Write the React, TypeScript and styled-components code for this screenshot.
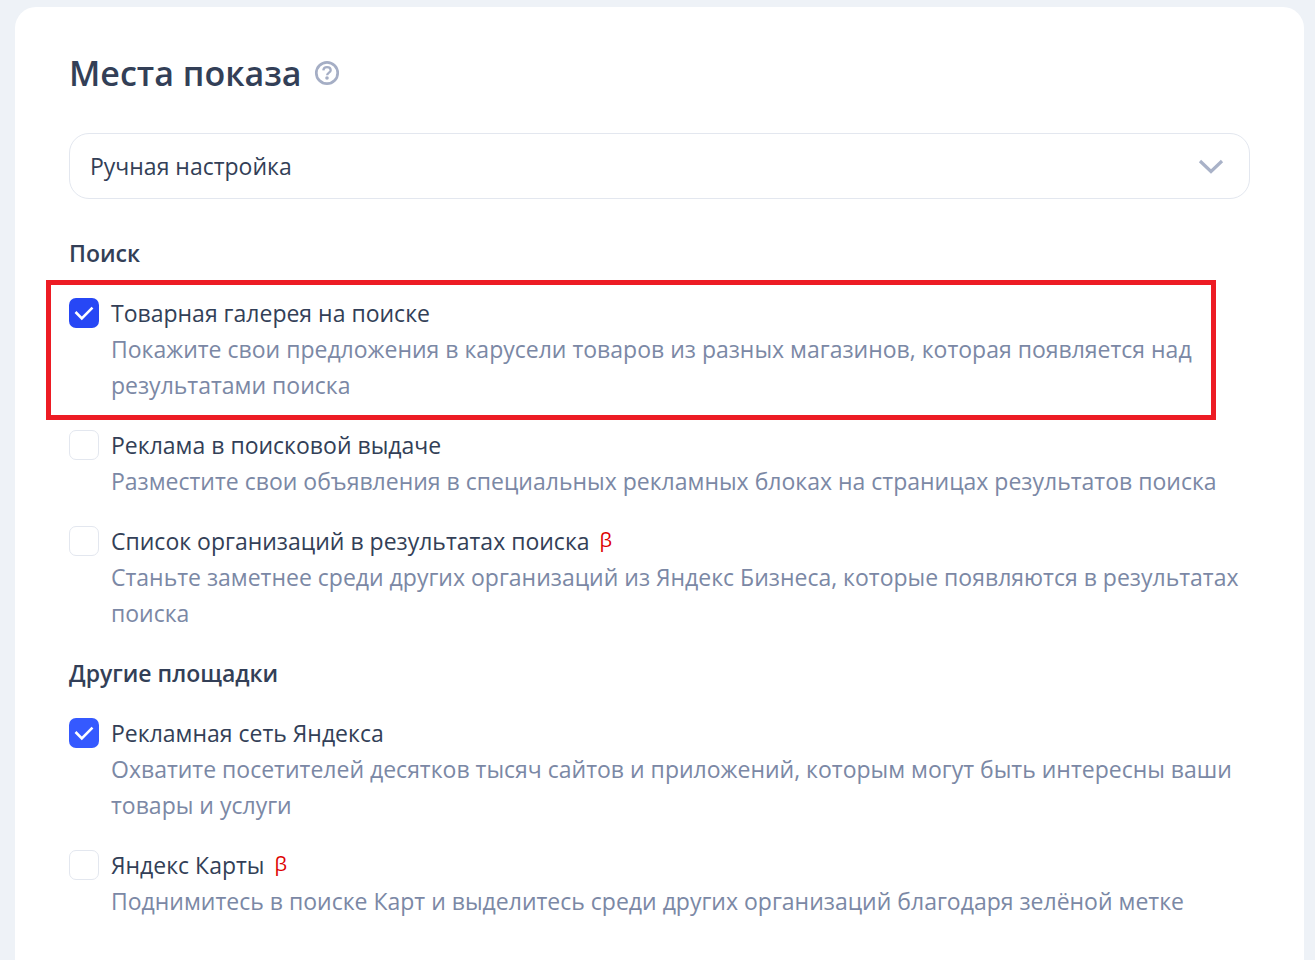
import React, { useId, useState } from "react";
import styled, { createGlobalStyle } from "styled-components";

const GlobalStyle = createGlobalStyle`
  *, *::before, *::after { box-sizing: border-box; }
  body {
    margin: 0;
    background: #eef2f7;
    color: #333f57;
    font-family: "Open Sans", "Noto Sans", sans-serif;
    font-size: 23px;
    line-height: 36px;
  }
`;

const Page = styled.div`
  padding: 7px 11px 0 15px;
`;

const Card = styled.main`
  min-height: calc(100vh - 7px);
  padding: 42px 54px 40px;
  border-radius: 21px 21px 0 0;
  background: #fff;
`;

const Header = styled.header`
  display: flex;
  align-items: center;
  gap: 12px;
  margin-bottom: 36px;
`;

const Title = styled.h1`
  margin: 0;
  font-size: 34px;
  line-height: 48px;
  font-weight: 600;
`;

const HelpButton = styled.button`
  display: flex;
  padding: 0;
  border: 0;
  background: none;
  cursor: pointer;
`;

const SelectField = styled.div`
  display: grid;
  align-items: center;
  margin-bottom: 36px;

  > * { grid-area: 1 / 1; }
  > svg { justify-self: end; margin-right: 25px; pointer-events: none; }
`;

const Select = styled.select`
  width: 100%;
  height: 66px;
  padding: 0 60px 0 20px;
  border: 1px solid #e3e7ef;
  border-radius: 20px;
  appearance: none;
  background: #fff;
  color: inherit;
  font: inherit;
`;

const Section = styled.section`
  display: flex;
  flex-direction: column;
  gap: 24px;

  & + & { margin-top: 24px; }
`;

const SectionTitle = styled.h2`
  margin: 0;
  font-size: 23px;
  line-height: 36px;
  font-weight: 600;
`;

const Option = styled.div`
  position: relative;
  display: flex;
  gap: 12px;
`;

const Frame = styled.div`
  position: absolute;
  inset: -15px 34px -17px -23px;
  border: 5px solid #ed1c24;
  pointer-events: none;
`;

const Tick = styled.span<{ $dark?: boolean }>`
  display: grid;
  flex: none;
  width: 30px;
  height: 30px;
  margin-top: 3px;

  > * { grid-area: 1 / 1; }
  > svg { pointer-events: none; visibility: hidden; }
  > input:checked { border-width: 0; background: ${(p) => (p.$dark ? "#2747f5" : "#3559ff")}; }
  > input:checked + svg { visibility: visible; }
`;

const Checkbox = styled.input`
  width: 30px;
  height: 30px;
  margin: 0;
  border: 1px solid #e3e7ef;
  border-radius: 7px;
  appearance: none;
  background: #fff;
  cursor: pointer;
`;

const OptionText = styled.div`
  flex: 1;
  min-width: 0;
`;

const OptionTitle = styled.label`
  display: block;
`;

const Beta = styled.sup`
  margin-left: 10px;
  color: #dd0000;
  font-size: 20px;
  line-height: 20px;
  vertical-align: 3px;
`;

const Description = styled.p`
  margin: 0;
  color: #7b88a5;
`;

interface Place {
  title: string;
  text: string;
  checked?: boolean;
  beta?: boolean;
  framed?: boolean;
}

const searchPlaces: Place[] = [
  {
    title: "Товарная галерея на поиске",
    text: "Покажите свои предложения в карусели товаров из разных магазинов, которая появляется над результатами поиска",
    checked: true,
    framed: true,
  },
  {
    title: "Реклама в поисковой выдаче",
    text: "Разместите свои объявления в специальных рекламных блоках на страницах результатов поиска",
  },
  {
    title: "Список организаций в результатах поиска",
    text: "Станьте заметнее среди других организаций из Яндекс Бизнеса, которые появляются в результатах поиска",
    beta: true,
  },
];

const otherPlaces: Place[] = [
  {
    title: "Рекламная сеть Яндекса",
    text: "Охватите посетителей десятков тысяч сайтов и приложений, которым могут быть интересны ваши товары и услуги",
    checked: true,
  },
  {
    title: "Яндекс Карты",
    text: "Поднимитесь в поиске Карт и выделитесь среди других организаций благодаря зелёной метке",
    beta: true,
  },
];

function PlaceOption({ title, text, checked = false, beta, framed }: Place) {
  const id = useId();
  const [on, setOn] = useState(checked);
  return (
    <Option>
      <Tick $dark={framed}>
        <Checkbox id={id} type="checkbox" checked={on} onChange={(e) => setOn(e.target.checked)} />
        <svg width="30" height="30" viewBox="0 0 30 30" fill="none" stroke="#fff" strokeWidth="2.6" aria-hidden="true">
          <path d="M6.500 14L12.800 20.300L23.500 9.600" />
        </svg>
      </Tick>
      <OptionText>
        <OptionTitle htmlFor={id}>
          {title}
          {beta && <Beta>β</Beta>}
        </OptionTitle>
        <Description>{text}</Description>
      </OptionText>
      {framed && <Frame />}
    </Option>
  );
}

export default function App() {
  return (
    <>
      <GlobalStyle />
      <Page>
        <Card>
          <Header>
            <Title>Места показа</Title>
            <HelpButton type="button" aria-label="Справка">
              <svg width="26" height="26" viewBox="0 0 26 26" fill="none" stroke="#a5aec5" aria-hidden="true">
                <circle cx="13" cy="13" r="10.7" strokeWidth="2.7" />
                <path d="M9.300 10.300C9.500 8.300 11 7.100 13 7.100C15.100 7.100 16.700 8.300 16.700 10.200C16.700 12.600 13.200 12.600 13.100 15.200" strokeWidth="2.3" />
                <circle cx="13" cy="18" r="1.8" fill="#a5aec5" stroke="none" />
              </svg>
            </HelpButton>
          </Header>
          <SelectField>
            <Select aria-label="Места показа" defaultValue="manual">
              <option value="manual">Ручная настройка</option>
            </Select>
            <svg width="28" height="18" viewBox="0 0 28 18" fill="none" stroke="#a9b2c8" strokeWidth="3.2" aria-hidden="true">
              <path d="M3 4L14 14.500L25 4" />
            </svg>
          </SelectField>
          <Section>
            <SectionTitle>Поиск</SectionTitle>
            {searchPlaces.map((p) => (
              <PlaceOption key={p.title} {...p} />
            ))}
          </Section>
          <Section>
            <SectionTitle>Другие площадки</SectionTitle>
            {otherPlaces.map((p) => (
              <PlaceOption key={p.title} {...p} />
            ))}
          </Section>
        </Card>
      </Page>
    </>
  );
}
